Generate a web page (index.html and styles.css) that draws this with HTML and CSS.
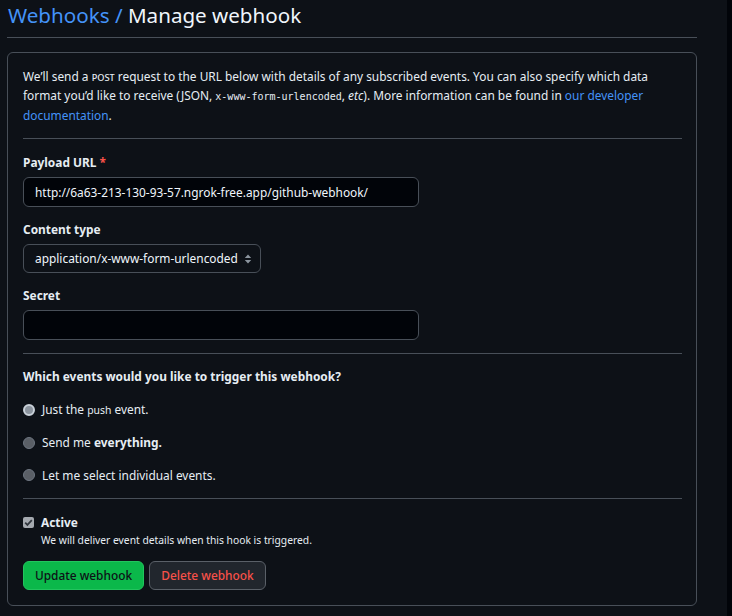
FILE: index.html
```html
<!DOCTYPE html>
<html lang="en">
<head>
<meta charset="utf-8">
<title>Manage webhook</title>
<link rel="stylesheet" href="styles.css">
</head>
<body>
<div class="shell">
  <main class="main">
    <div class="subhead">
      <h2 class="subhead-heading"><a class="crumb" href="#">Webhooks</a> <span class="sep">/</span> Manage webhook</h2>
    </div>
    <form class="box">
      <p class="intro">We’ll send a <span class="smallcaps">post</span> request to the URL below with details of any subscribed events. You can also specify which data<br>format you’d like to receive (JSON, <code class="code">x-www-form-urlencoded</code>, <em>etc</em>). More information can be found in <a class="link" href="#">our developer<br>documentation</a>.</p>
      <div class="rule"></div>
      <div class="field">
        <label class="label">Payload URL <span class="req">*</span></label>
        <div class="input input-wide">http://6a63-213-130-93-57.ngrok-free.app/github-webhook/</div>
      </div>
      <div class="field">
        <label class="label">Content type</label>
        <div class="select">
          <span class="select-value">application/x-www-form-urlencoded</span>
          <svg class="updown" width="8" height="10" viewBox="0 0 8 10"><path d="M4 0.5 L7.2 4 H0.8 Z M4 9.5 L0.8 6 H7.2 Z" fill="#8b949e"/></svg>
        </div>
      </div>
      <div class="field">
        <label class="label">Secret</label>
        <div class="input input-wide"></div>
      </div>
      <div class="rule rule-mid"></div>
      <div class="events">
        <div class="question">Which events would you like to trigger this webhook?</div>
        <div class="option"><span class="radio radio-on"></span><span>Just the <code class="code code-push">push</code> event.</span></div>
        <div class="option"><span class="radio"></span><span>Send me <strong>everything.</strong></span></div>
        <div class="option"><span class="radio"></span><span>Let me select individual events.</span></div>
      </div>
      <div class="rule rule-low"></div>
      <div class="active">
        <div class="check-row">
          <span class="checkbox"><svg width="11" height="11" viewBox="0 0 11 11"><path d="M2.2 5.6 L4.4 7.9 L8.8 3.1" fill="none" stroke="#30363d" stroke-width="1.7"/></svg></span>
          <span class="check-label">Active</span>
        </div>
        <div class="note">We will deliver event details when this hook is triggered.</div>
      </div>
      <div class="actions">
        <button type="button" class="btn btn-primary">Update webhook</button>
        <button type="button" class="btn btn-danger">Delete webhook</button>
      </div>
    </form>
  </main>
  <div class="edge"></div>
</div>
</body>
</html>
```
FILE: styles.css
```css
* { box-sizing: border-box; }
html, body { margin: 0; padding: 0; }
body {
  background: #0d1117;
  color: #e6edf3;
  font-family: "Noto Sans", "Open Sans", sans-serif;
  font-size: 11.9px;
  line-height: 19px;
}
.shell {
  display: flex;
  min-height: 616px;
}
.main {
  width: 727px;
  padding: 0 30px 0 7px;
}
.edge {
  flex: 1;
  background: #010409;
}
.subhead {
  border-bottom: 1px solid #484f58;
  padding: 0 0 7px 1px;
}
.subhead-heading {
  margin: 0;
  font-size: 20.6px;
  font-weight: 400;
  line-height: 30px;
  color: #f0f6fc;
}
.crumb, .sep { color: #4493f8; text-decoration: none; }
.box {
  margin-top: 14px;
  border: 1px solid #484f58;
  border-radius: 6px;
  padding: 14px 14px 15px 15px;
}
.intro { margin: 0; white-space: nowrap; }
.smallcaps { font-variant: small-caps; text-transform: lowercase; font-size: 11.4px; }
.code {
  font-family: "DejaVu Sans Mono", "Liberation Mono", monospace;
  font-size: 10px;
}
.link { color: #4493f8; text-decoration: none; }
.rule {
  height: 1px;
  background: #484f58;
  margin: 13px 0 14px;
}
.rule-mid { margin: 13px 0 13px; }
.rule-low { margin: 13px 0 14px; }
.field { display: flex; flex-direction: column; }
.field + .field { margin-top: 13px; }
.label { font-weight: 700; margin-bottom: 5px; }
.req { color: #f85149; }
.input {
  height: 30px;
  border: 1px solid #484f58;
  border-radius: 6px;
  background: #010409;
  padding: 0 10px 0 11px;
  display: flex;
  align-items: center;
  color: #f0f6fc;
  white-space: nowrap;
}
.input-wide { width: 396px; }
.select {
  width: 238px;
  height: 29px;
  border: 1px solid #484f58;
  border-radius: 6px;
  background: #0d1117;
  padding: 0 8px 0 11px;
  display: flex;
  align-items: center;
  justify-content: space-between;
  color: #f0f6fc;
}
.select-value { white-space: nowrap; }
.events { display: flex; flex-direction: column; gap: 13.5px; }
.question { font-weight: 700; }
.option { display: flex; align-items: center; gap: 7px; }
.radio {
  width: 12px;
  height: 12px;
  border-radius: 50%;
  background: #5a5f66;
  border: 1px solid #6e7681;
  flex: none;
}
.radio-on {
  background: #8b949e;
  border: 2.5px solid #c9d1d9;
}
.code-push { font-family: "Noto Sans", sans-serif; font-size: 10.4px; }
.active { display: flex; flex-direction: column; }
.check-row { display: flex; align-items: center; gap: 7px; }
.checkbox {
  width: 11px;
  height: 11px;
  border-radius: 2px;
  background: #a5aab0;
  display: flex;
  flex: none;
}
.check-label { font-weight: 700; }
.note {
  font-size: 10.3px;
  line-height: 16px;
  padding-left: 18px;
  color: #e6edf3;
}
.actions { display: flex; gap: 5px; margin-top: 13px; }
.btn {
  height: 29px;
  border-radius: 6px;
  font-family: inherit;
  font-size: 11.9px;
  font-weight: 500;
  padding: 0 8px;
  white-space: nowrap;
  cursor: pointer;
}
.btn-primary {
  background: #0bb84a;
  border: 1px solid #22c55e;
  color: #0d1117;
  width: 121px;
}
.btn-danger {
  background: #21262d;
  border: 1px solid #5a6068;
  color: #f85149;
  width: 117px;
}
```
